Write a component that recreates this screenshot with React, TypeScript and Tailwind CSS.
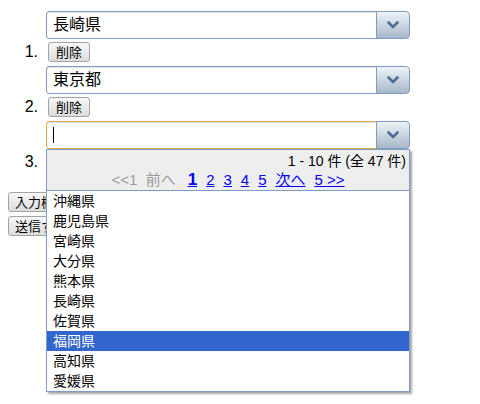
import React from "react";

const FONT = "font-['Liberation_Sans','Noto_Sans_CJK_JP',sans-serif]";

const PREFS = [
  "沖縄県",
  "鹿児島県",
  "宮崎県",
  "大分県",
  "熊本県",
  "長崎県",
  "佐賀県",
  "福岡県",
  "高知県",
  "愛媛県",
];

function Chevron() {
  return (
    <svg width="12" height="8" viewBox="0 0 12 8" fill="none">
      <path
        d="M1.5 1.5 L6 6 L10.5 1.5"
        stroke="#4d6d93"
        strokeWidth="2.6"
        strokeLinecap="round"
        strokeLinejoin="round"
      />
    </svg>
  );
}

function Combo({ value, focused }: { value: string; focused?: boolean }) {
  return (
    <div className="flex h-[28px] w-[364px]">
      <div
        className={
          focused
            ? "flex flex-1 items-center rounded-l-[3px] border border-[#e0a84a] bg-white px-[6px] shadow-[inset_0_1px_1px_rgba(0,0,0,0.12)]"
            : "flex flex-1 items-center rounded-l-[3px] border border-[#7f9dc0] bg-white px-[6px] shadow-[inset_0_1px_1px_rgba(0,0,0,0.12)]"
        }
      >
        {focused ? (
          <span className="block h-[16px] w-px bg-black" />
        ) : (
          <span className="text-[16px] leading-none">{value}</span>
        )}
      </div>
      <div className="-ml-px flex w-[34px] items-center justify-center rounded-r-[4px] border border-[#7f9dc0] bg-gradient-to-b from-[#eef4f8] to-[#a6b8c9]">
        <Chevron />
      </div>
    </div>
  );
}

function Btn({ children, className = "" }: { children: React.ReactNode; className?: string }) {
  return (
    <button
      className={
        "h-[20px] rounded-[3px] border border-[#a3a3a3] bg-gradient-to-b from-[#f8f8f8] to-[#dcdcdc] px-[6px] text-[13px] leading-none text-black " +
        className
      }
    >
      {children}
    </button>
  );
}

function Popup() {
  return (
    <div className="absolute left-0 top-[28px] z-10 w-[364px] border border-[#7f9dc0] bg-white shadow-[2px_2px_2px_rgba(0,0,0,0.35)]">
      <div className="h-[41px] border-b border-[#7f9dc0] bg-[#eeeeee]">
        <div className="pr-[3px] pt-[2px] text-right text-[14px] leading-[18px]">
          1 - 10 件 (全 47 件)
        </div>
        <div className="flex items-end justify-center gap-[9px] text-[15px] leading-[19px]">
          <span className="text-[#9b9b9b]">&lt;&lt;1&nbsp; 前へ</span>
          <span className="ml-[3px] text-[17px] font-bold text-[#0000ee] underline">1</span>
          <span className="text-[#0000ee] underline">2</span>
          <span className="text-[#0000ee] underline">3</span>
          <span className="text-[#0000ee] underline">4</span>
          <span className="text-[#0000ee] underline">5</span>
          <span className="text-[#0000ee] underline">次へ</span>
          <span className="text-[#0000ee] underline">5 &gt;&gt;</span>
        </div>
      </div>
      <ul>
        {PREFS.map((p) => (
          <li
            key={p}
            className={
              p === "福岡県"
                ? "flex h-[20px] items-center bg-[#3366cc] px-[6px] text-[14px] text-white"
                : "flex h-[20px] items-center px-[6px] text-[14px]"
            }
          >
            {p}
          </li>
        ))}
      </ul>
    </div>
  );
}

export default function App() {
  const items = ["長崎県", "東京都", ""];
  return (
    <div className={"min-h-[404px] bg-white pl-[8px] pt-[11px] text-black " + FONT}>
      <ol>
        {items.map((v, i) => (
          <li key={i} className="mb-[4px] flex items-end">
            <span className="w-[38px] pb-[2px] pr-[8px] text-right text-[16px] leading-none">
              {i + 1}.
            </span>
            <div className="relative flex flex-col items-start gap-[3px]">
              <Combo value={v} focused={i === 2} />
              <Btn className="ml-[2px] w-[42px]">削除</Btn>
              {i === 2 && <Popup />}
            </div>
          </li>
        ))}
      </ol>
      <div className="mt-[20px] flex flex-col items-start gap-[4px]">
        <Btn>入力欄追加</Btn>
        <Btn>送信する</Btn>
      </div>
    </div>
  );
}
